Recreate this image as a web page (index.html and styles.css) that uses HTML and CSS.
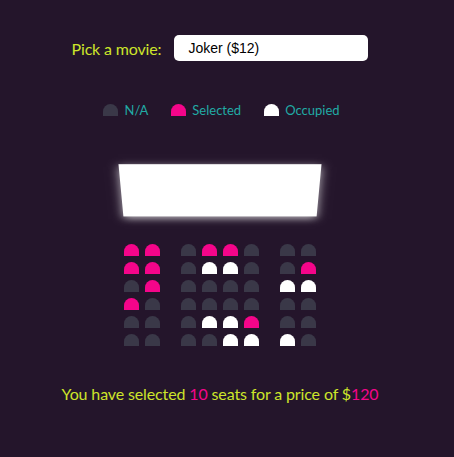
FILE: index.html
```html
<!DOCTYPE html>
<html lang="en">
<head>
<meta charset="UTF-8">
<title>Movie Seat Booking</title>
<link rel="stylesheet" href="styles.css">
</head>
<body>
  <div class="movie-container">
    <label class="movie-label">Pick a movie:</label>
    <select class="movie-select">
      <option>Joker ($12)</option>
    </select>
  </div>

  <ul class="showcase">
    <li><div class="seat"></div><small>N/A</small></li>
    <li><div class="seat selected"></div><small>Selected</small></li>
    <li><div class="seat occupied"></div><small>Occupied</small></li>
  </ul>

  <div class="container">
    <div class="screen"></div>
    <div class="row">
      <div class="seat selected"></div><div class="seat selected"></div>
      <div class="seat"></div><div class="seat selected"></div><div class="seat selected"></div><div class="seat"></div>
      <div class="seat"></div><div class="seat"></div>
    </div>
    <div class="row">
      <div class="seat selected"></div><div class="seat selected"></div>
      <div class="seat"></div><div class="seat occupied"></div><div class="seat occupied"></div><div class="seat"></div>
      <div class="seat"></div><div class="seat selected"></div>
    </div>
    <div class="row">
      <div class="seat"></div><div class="seat selected"></div>
      <div class="seat"></div><div class="seat"></div><div class="seat"></div><div class="seat"></div>
      <div class="seat occupied"></div><div class="seat occupied"></div>
    </div>
    <div class="row">
      <div class="seat selected"></div><div class="seat"></div>
      <div class="seat"></div><div class="seat"></div><div class="seat"></div><div class="seat"></div>
      <div class="seat"></div><div class="seat"></div>
    </div>
    <div class="row">
      <div class="seat"></div><div class="seat"></div>
      <div class="seat"></div><div class="seat occupied"></div><div class="seat occupied"></div><div class="seat selected"></div>
      <div class="seat"></div><div class="seat"></div>
    </div>
    <div class="row">
      <div class="seat"></div><div class="seat"></div>
      <div class="seat"></div><div class="seat"></div><div class="seat occupied"></div><div class="seat occupied"></div>
      <div class="seat occupied"></div><div class="seat"></div>
    </div>
  </div>

  <p class="text">You have selected <span>10</span> seats for a price of $<span>120</span></p>
</body>
</html>
```
FILE: styles.css
```css
* {
  box-sizing: border-box;
}

html {
  background-color: #24152b;
}

body {
  margin: 0;
  width: 440px;
  min-height: 457px;
  padding-top: 35px;
  background-color: #24152b;
  color: #cde52a;
  font-family: Lato, "Liberation Sans", sans-serif;
  display: flex;
  flex-direction: column;
  align-items: center;
}

.movie-container {
  display: flex;
  align-items: center;
  height: 26px;
}

.movie-label {
  font-size: 16px;
  letter-spacing: -0.15px;
}

.movie-select {
  width: 194px;
  height: 26px;
  margin-left: 13px;
  padding: 5px 14px;
  border: 0;
  border-radius: 5px;
  background-color: #fff;
  color: #000;
  font-family: "Liberation Sans", Arial, sans-serif;
  font-size: 14px;
  -webkit-appearance: none;
  appearance: none;
}

.showcase {
  list-style: none;
  display: flex;
  margin: 40px 0 0;
  padding: 0;
  color: #21aaa5;
}

.showcase li {
  display: flex;
  align-items: center;
  height: 18px;
  margin: 0 10px;
}

.showcase li small {
  font-size: 13px;
  margin-left: 3px;
}

.seat {
  width: 15px;
  height: 12px;
  margin: 3px;
  background-color: #3a3848;
  border-top-left-radius: 10px;
  border-top-right-radius: 10px;
}

.seat.selected {
  background-color: #f5058a;
}

.seat.occupied {
  background-color: #fff;
}

.container {
  perspective: 1000px;
  margin-top: 22px;
  margin-bottom: 30px;
}

.screen {
  height: 70px;
  width: 100%;
  margin: 15px 0;
  background-color: #fff;
  transform: rotateX(-45deg);
  box-shadow: 0 3px 10px rgba(255, 255, 255, 0.7);
}

.row {
  display: flex;
}

.row .seat:nth-of-type(2) {
  margin-right: 18px;
}

.row .seat:nth-last-of-type(2) {
  margin-left: 18px;
}

.text {
  margin: 5px 0;
  font-size: 16px;
  letter-spacing: -0.13px;
}

.text span {
  color: #f5058a;
}
```
